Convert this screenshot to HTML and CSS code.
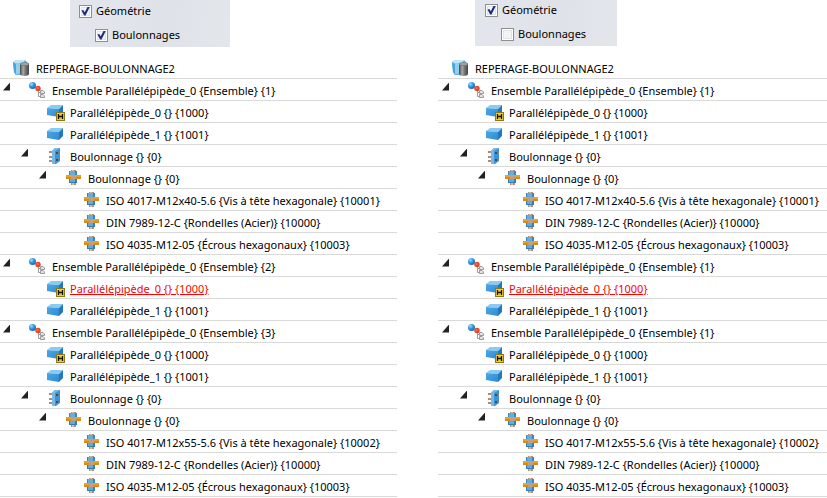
FILE: index.html
```html
<!DOCTYPE html>
<html lang="fr">
<head>
<meta charset="utf-8">
<title>Repérage boulonnage</title>
<link rel="stylesheet" href="styles.css">
</head>
<body>
<svg class="sprite" aria-hidden="true">
  <defs>
    <linearGradient id="metal"><stop offset="0" stop-color="#444"/><stop offset=".35" stop-color="#aaa"/><stop offset=".6" stop-color="#777"/><stop offset="1" stop-color="#444"/></linearGradient>
    <linearGradient id="front" x1="0" y1="0" x2="1" y2="1"><stop offset="0" stop-color="#4aa9e6"/><stop offset="1" stop-color="#2f8ad4"/></linearGradient>
    <radialGradient id="ball" cx=".35" cy=".3" r=".75"><stop offset="0" stop-color="#9bdcff"/><stop offset=".5" stop-color="#3396e0"/><stop offset="1" stop-color="#1862ac"/></radialGradient>
    <symbol id="root" viewBox="0 0 20 18">
      <path d="M2 3L5 1H14L16 3V14L14 16H5L3 13Z" fill="#69b9e8"/>
      <path d="M2 3H12V14L5 15Z" fill="#92d0f2"/>
      <path d="M2 3L5 1H14L12 4H4Z" fill="#bce5fa"/>
      <path d="M2 3L5 5V16L3 13Z" fill="#4ba3dc"/>
      <path d="M9 5V15C9 17.500 18 17.500 18 15V5Z" fill="url(#metal)"/>
      <ellipse cx="13.500" cy="5" rx="4.500" ry="1.500" fill="#a5a5a5" stroke="#666" stroke-width=".6"/>
    </symbol>
    <symbol id="assembly" viewBox="0 0 20 18">
      <path d="M5 5L11 8L14 11" fill="none" stroke="#999" stroke-width="1"/>
      <circle cx="5.500" cy="4.500" r="3.500" fill="url(#ball)"/>
      <circle cx="11" cy="7.500" r="2.700" fill="#e2482c"/>
      <circle cx="10.500" cy="7" r="1" fill="#f47a58"/>
      <path d="M11.500 10V15.500H13M11.500 11.500H13" fill="none" stroke="#999" stroke-width="1"/>
      <path d="M13.500 9.500H16L17.500 11V12.500H13.500ZM13.500 13.500H16L17.500 15V16.500H13.500Z" fill="#e4e4e4" stroke="#999" stroke-width="1"/>
    </symbol>
    <symbol id="box" viewBox="0 0 20 18">
      <path d="M2 6L6 3H18L14 7Z" fill="#8bcbf2"/>
      <path d="M2 6L14 7V15L2 13Z" fill="url(#front)"/>
      <path d="M14 7L18 3V11L14 15Z" fill="#2478c0"/>
    </symbol>
    <symbol id="box-h" viewBox="0 0 20 18">
      <path d="M2 5L6 2H18L14 6Z" fill="#8bcbf2"/>
      <path d="M2 5L14 6V14L2 12Z" fill="url(#front)"/>
      <path d="M14 6L18 2V11L14 14Z" fill="#2478c0"/>
      <rect x="11.500" y="9.500" width="8" height="8" fill="#f3cc2f" stroke="#8e7716"/>
      <path d="M13.500 11V16M17.500 11V16M13.500 13.500H17.500" fill="none" stroke="#151200" stroke-width="1.300"/>
    </symbol>
    <symbol id="plates" viewBox="0 0 20 18">
      <path d="M4 5H8M4 10H8M4 14H8" stroke="#ac8b7b" stroke-width="2"/>
      <path d="M7 4L10 1H15V14L11 17H7Z" fill="#3a94d7"/>
      <path d="M7 4L10 1H15L10 4V17H7Z" fill="#74b9e7"/>
      <path d="M11 6H13M11 13H13" stroke="#444b54" stroke-width="2"/>
      <path d="M13 5H15M13 12H15" stroke="#777e83" stroke-width="2"/>
    </symbol>
    <symbol id="bolt" viewBox="0 0 20 18">
      <path d="M8 1H13V16H8Z" fill="#bd8b72"/>
      <path d="M9 1H11V16H9Z" fill="#e0b79e"/>
      <path d="M6 2H14V6H6Z" fill="#3489c4"/>
      <path d="M7 2H12V6H7Z" fill="#63afdc"/>
      <path d="M3 6H18V10H3Z" fill="#d98b18"/>
      <path d="M3 6H18V8H3Z" fill="#e9a02c"/>
      <path d="M8 6H13V10H8Z" fill="#c99c80"/>
      <path d="M6 10H14V14H6Z" fill="#2e80ba"/>
      <path d="M7 10H12V13H7Z" fill="#62abd6"/>
    </symbol>
  </defs>
</svg>
<main class="compare">
  <section class="pane">
    <div class="options">
      <label class="option"><input type="checkbox" checked>Géométrie</label>
      <label class="option option-child"><input type="checkbox" checked>Boulonnages</label>
    </div>
    <ul class="tree">
      <li class="row root"><svg class="icon"><use href="#root"/></svg><span>REPERAGE-BOULONNAGE2</span></li>
      <li class="row l1"><button class="toggle" aria-label="Réduire"></button><svg class="icon"><use href="#assembly"/></svg><span>Ensemble Parallélépipède_0 {Ensemble} {1}</span></li>
      <li class="row l2 leaf"><svg class="icon"><use href="#box-h"/></svg><span>Parallélépipède_0 {} {1000}</span></li>
      <li class="row l2 leaf"><svg class="icon"><use href="#box"/></svg><span>Parallélépipède_1 {} {1001}</span></li>
      <li class="row l2"><button class="toggle" aria-label="Réduire"></button><svg class="icon"><use href="#plates"/></svg><span>Boulonnage {} {0}</span></li>
      <li class="row l3"><button class="toggle" aria-label="Réduire"></button><svg class="icon"><use href="#bolt"/></svg><span>Boulonnage {} {0}</span></li>
      <li class="row l4 leaf"><svg class="icon"><use href="#bolt"/></svg><span>ISO 4017-M12x40-5.6 {Vis à tête hexagonale} {10001}</span></li>
      <li class="row l4 leaf"><svg class="icon"><use href="#bolt"/></svg><span>DIN 7989-12-C {Rondelles (Acier)} {10000}</span></li>
      <li class="row l4 leaf"><svg class="icon"><use href="#bolt"/></svg><span>ISO 4035-M12-05 {Écrous hexagonaux} {10003}</span></li>
      <li class="row l1"><button class="toggle" aria-label="Réduire"></button><svg class="icon"><use href="#assembly"/></svg><span>Ensemble Parallélépipède_0 {Ensemble} {2}</span></li>
      <li class="row l2 leaf"><svg class="icon"><use href="#box-h"/></svg><a href="#">Parallélépipède_0 {} {1000}</a></li>
      <li class="row l2 leaf"><svg class="icon"><use href="#box"/></svg><span>Parallélépipède_1 {} {1001}</span></li>
      <li class="row l1"><button class="toggle" aria-label="Réduire"></button><svg class="icon"><use href="#assembly"/></svg><span>Ensemble Parallélépipède_0 {Ensemble} {3}</span></li>
      <li class="row l2 leaf"><svg class="icon"><use href="#box-h"/></svg><span>Parallélépipède_0 {} {1000}</span></li>
      <li class="row l2 leaf"><svg class="icon"><use href="#box"/></svg><span>Parallélépipède_1 {} {1001}</span></li>
      <li class="row l2"><button class="toggle" aria-label="Réduire"></button><svg class="icon"><use href="#plates"/></svg><span>Boulonnage {} {0}</span></li>
      <li class="row l3"><button class="toggle" aria-label="Réduire"></button><svg class="icon"><use href="#bolt"/></svg><span>Boulonnage {} {0}</span></li>
      <li class="row l4 leaf"><svg class="icon"><use href="#bolt"/></svg><span>ISO 4017-M12x55-5.6 {Vis à tête hexagonale} {10002}</span></li>
      <li class="row l4 leaf"><svg class="icon"><use href="#bolt"/></svg><span>DIN 7989-12-C {Rondelles (Acier)} {10000}</span></li>
      <li class="row l4 leaf"><svg class="icon"><use href="#bolt"/></svg><span>ISO 4035-M12-05 {Écrous hexagonaux} {10003}</span></li>
    </ul>
  </section>
  <section class="pane pane-right">
    <div class="options">
      <label class="option"><input type="checkbox" checked>Géométrie</label>
      <label class="option option-child"><input type="checkbox">Boulonnages</label>
    </div>
    <ul class="tree">
      <li class="row root"><svg class="icon"><use href="#root"/></svg><span>REPERAGE-BOULONNAGE2</span></li>
      <li class="row l1"><button class="toggle" aria-label="Réduire"></button><svg class="icon"><use href="#assembly"/></svg><span>Ensemble Parallélépipède_0 {Ensemble} {1}</span></li>
      <li class="row l2 leaf"><svg class="icon"><use href="#box-h"/></svg><span>Parallélépipède_0 {} {1000}</span></li>
      <li class="row l2 leaf"><svg class="icon"><use href="#box"/></svg><span>Parallélépipède_1 {} {1001}</span></li>
      <li class="row l2"><button class="toggle" aria-label="Réduire"></button><svg class="icon"><use href="#plates"/></svg><span>Boulonnage {} {0}</span></li>
      <li class="row l3"><button class="toggle" aria-label="Réduire"></button><svg class="icon"><use href="#bolt"/></svg><span>Boulonnage {} {0}</span></li>
      <li class="row l4 leaf"><svg class="icon"><use href="#bolt"/></svg><span>ISO 4017-M12x40-5.6 {Vis à tête hexagonale} {10001}</span></li>
      <li class="row l4 leaf"><svg class="icon"><use href="#bolt"/></svg><span>DIN 7989-12-C {Rondelles (Acier)} {10000}</span></li>
      <li class="row l4 leaf"><svg class="icon"><use href="#bolt"/></svg><span>ISO 4035-M12-05 {Écrous hexagonaux} {10003}</span></li>
      <li class="row l1"><button class="toggle" aria-label="Réduire"></button><svg class="icon"><use href="#assembly"/></svg><span>Ensemble Parallélépipède_0 {Ensemble} {1}</span></li>
      <li class="row l2 leaf"><svg class="icon"><use href="#box-h"/></svg><a href="#">Parallélépipède_0 {} {1000}</a></li>
      <li class="row l2 leaf"><svg class="icon"><use href="#box"/></svg><span>Parallélépipède_1 {} {1001}</span></li>
      <li class="row l1"><button class="toggle" aria-label="Réduire"></button><svg class="icon"><use href="#assembly"/></svg><span>Ensemble Parallélépipède_0 {Ensemble} {1}</span></li>
      <li class="row l2 leaf"><svg class="icon"><use href="#box-h"/></svg><span>Parallélépipède_0 {} {1000}</span></li>
      <li class="row l2 leaf"><svg class="icon"><use href="#box"/></svg><span>Parallélépipède_1 {} {1001}</span></li>
      <li class="row l2"><button class="toggle" aria-label="Réduire"></button><svg class="icon"><use href="#plates"/></svg><span>Boulonnage {} {0}</span></li>
      <li class="row l3"><button class="toggle" aria-label="Réduire"></button><svg class="icon"><use href="#bolt"/></svg><span>Boulonnage {} {0}</span></li>
      <li class="row l4 leaf"><svg class="icon"><use href="#bolt"/></svg><span>ISO 4017-M12x55-5.6 {Vis à tête hexagonale} {10002}</span></li>
      <li class="row l4 leaf"><svg class="icon"><use href="#bolt"/></svg><span>DIN 7989-12-C {Rondelles (Acier)} {10000}</span></li>
      <li class="row l4 leaf"><svg class="icon"><use href="#bolt"/></svg><span>ISO 4035-M12-05 {Écrous hexagonaux} {10003}</span></li>
    </ul>
  </section>
</main>
</body>
</html>
```
FILE: styles.css
```css
* { box-sizing: border-box; }

body {
  margin: 0;
  background: #fff;
  color: #000;
  font: 11px/20px "Noto Sans", "Open Sans", sans-serif;
}

.sprite { position: absolute; width: 0; height: 0; }

.compare {
  display: grid;
  grid-template-columns: 397fr 389fr;
  column-gap: 41px;
}

.pane {
  --edge: 0px;
  display: grid;
  grid-template-rows: 57px auto;
  align-items: start;
  min-width: 0;
}

.pane-right { --edge: 1px; }

.options {
  display: flex;
  flex-direction: column;
  gap: 4px;
  justify-self: start;
  margin-left: 70px;
  padding: 1px 50px 2px 9px;
  background: linear-gradient(100deg, #e3e6ec, #dfe3e9 60%, #e3e6eb);
}

.pane-right .options {
  margin-left: 37px;
  padding: 0 31px 2px 10px;
}

.option {
  display: flex;
  align-items: center;
  gap: 4px;
}

.option-child { padding-left: 16px; }

.option input {
  appearance: none;
  display: grid;
  width: 13px;
  height: 13px;
  margin: 0;
  border: 1px solid #8e8f8f;
  background: #f4f4f4;
  box-shadow: inset 0 0 0 1px #fff, inset 0 0 0 2px #e0e2e5;
}

.option input:checked::before {
  content: "";
  margin: 1px;
  background: #1d2f7c;
  clip-path: polygon(5% 45%, 25% 40%, 42% 65%, 75% 0, 100% 0, 50% 100%, 35% 100%);
}

.tree {
  margin: 0;
  padding: 0;
  list-style: none;
  min-width: 0;
}

.row {
  display: flex;
  align-items: center;
  height: 22px;
  padding-left: calc(var(--edge) + var(--indent));
  border-bottom: 1px solid #d9d9d9;
  white-space: nowrap;
}

.row span,
.row a { margin-top: 2px; }

.root { --indent: 11px; }
.l1 { --indent: 3px; }
.l2 { --indent: 21px; }
.l3 { --indent: 39px; }
.l4 { --indent: 57px; }

.leaf::before { content: ""; flex: 0 0 24px; }

.toggle {
  flex: 0 0 7px;
  height: 8px;
  margin: 0 17px 6px 0;
  padding: 0;
  border: 0;
  background: #222;
  clip-path: polygon(100% 0, 100% 100%, 0 100%);
}

.icon {
  flex: none;
  width: 20px;
  height: 18px;
  margin-right: 5px;
}

.row a {
  color: #f00;
  text-decoration: underline;
}
```
